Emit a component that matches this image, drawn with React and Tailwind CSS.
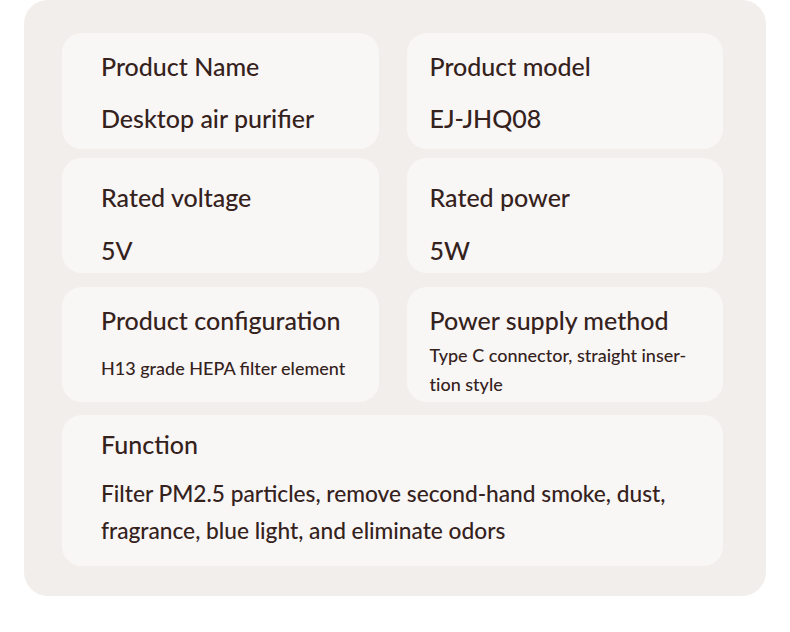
import React from 'react';

const App = () => {
  return (
    <div
      className="w-[790px] h-[632px] bg-white text-[#35221d] font-medium"
      style={{ fontFamily: 'Lato, "Open Sans", sans-serif' }}
    >
      <div className="ml-[24px] w-[742px] h-[596px] rounded-[24px] bg-[#f2eeeb] pt-[33px] pl-[38px] pr-[43px]">
        <div className="grid grid-cols-2 gap-x-[28px]">
          {/* Row 1 */}
          <div className="h-[116px] rounded-[20px] bg-[#f9f7f5] pt-[18px] pl-[39px]">
            <p className="text-[25px] leading-[30px]">Product Name</p>
            <p className="mt-[22px] text-[25px] leading-[30px]">Desktop air purifier</p>
          </div>
          <div className="h-[116px] rounded-[20px] bg-[#f9f7f5] pt-[18px] pl-[23px]">
            <p className="text-[25px] leading-[30px]">Product model</p>
            <p className="mt-[22px] text-[25px] leading-[30px]">EJ-JHQ08</p>
          </div>

          {/* Row 2 */}
          <div className="mt-[9px] h-[115px] rounded-[20px] bg-[#f9f7f5] pt-[24px] pl-[39px]">
            <p className="text-[25px] leading-[30px]">Rated voltage</p>
            <p className="mt-[23px] text-[25px] leading-[30px]">5V</p>
          </div>
          <div className="mt-[9px] h-[115px] rounded-[20px] bg-[#f9f7f5] pt-[24px] pl-[23px]">
            <p className="text-[25px] leading-[30px]">Rated power</p>
            <p className="mt-[23px] text-[25px] leading-[30px]">5W</p>
          </div>

          {/* Row 3 */}
          <div className="mt-[14px] h-[115px] rounded-[20px] bg-[#f9f7f5] pt-[18px] pl-[39px]">
            <p className="text-[25px] leading-[30px]">Product configuration</p>
            <p className="mt-[18px] text-[18px] leading-[30px]">H13 grade HEPA filter element</p>
          </div>
          <div className="mt-[14px] h-[115px] rounded-[20px] bg-[#f9f7f5] pt-[18px] pl-[23px] pr-[20px]">
            <p className="text-[25px] leading-[30px]">Power supply method</p>
            <p className="mt-[6px] text-[18px] leading-[29px] [font-variant-ligatures:none]">
              Type C connector, straight inser-
              <br />
              tion style
            </p>
          </div>

          {/* Row 4 */}
          <div className="col-span-2 mt-[13px] h-[151px] rounded-[20px] bg-[#f9f7f5] pt-[14px] pl-[39px]">
            <p className="text-[25px] leading-[30px]">Function</p>
            <p className="mt-[16px] text-[22.7px] leading-[37px]">
              Filter PM2.5 particles, remove second-hand smoke, dust,
              <br />
              fragrance, blue light, and eliminate odors
            </p>
          </div>
        </div>
      </div>
    </div>
  );
};

export default App;
